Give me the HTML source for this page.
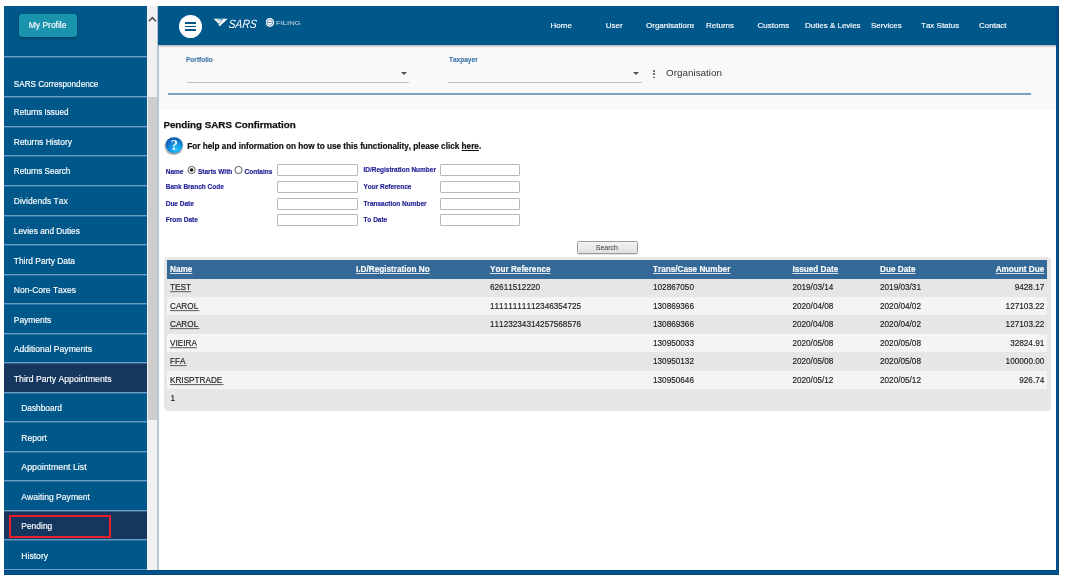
<!DOCTYPE html>
<html><head><meta charset="utf-8">
<style>
*{box-sizing:border-box;margin:0;padding:0}
html,body{width:1066px;height:582px;overflow:hidden;background:#fff;font-family:"Liberation Sans",sans-serif;-webkit-font-smoothing:antialiased;font-kerning:none}
#root{position:absolute;left:0;top:0;width:1066px;height:582px;will-change:transform}
.sk{-webkit-text-stroke:0.2px currentColor}
.it span,.fl,.lbl,.nav,.th,.btn-prof{-webkit-text-stroke:0.15px currentColor}
.a{position:absolute;white-space:nowrap}
#side{position:absolute;left:4px;top:6px;width:143px;height:569px;background:#00578a;overflow:hidden}
.btn-prof{position:absolute;left:14.6px;top:8.3px;width:58px;height:22.6px;background:#1a93ac;border-radius:3px;box-shadow:0 1px 2px rgba(0,0,0,.35);color:#fff;font-size:8.5px;line-height:23.2px;text-align:center}
.dv{position:absolute;left:0;width:143px;height:1px;background:#6a9dc2;box-shadow:0 1px 0 rgba(100,150,190,.45);z-index:1}
.it{position:absolute;left:0;width:143px;color:#fff;font-size:8.4px;white-space:nowrap}
.it span{position:absolute;left:10px;line-height:10px;transform:scaleY(1.1);transform-origin:0 8px}
.dark{background:#15375f}
#scr{position:absolute;left:147px;top:6px;width:10px;height:564px;background:#f1f1f1}
#thumb{position:absolute;left:1px;top:91.4px;width:9px;height:322.5px;background:#cdcdcd}
#cleft{position:absolute;left:157px;top:6px;width:2px;height:564px;background:#b5c8d8}
#hdr{position:absolute;left:158px;top:6px;width:901px;height:39px;background:#00578a;box-shadow:0 2px 2px -1px rgba(0,0,0,.35);z-index:2}
.nav{position:absolute;color:#fff;font-size:8px;white-space:nowrap;line-height:10px}
#filt{position:absolute;left:159px;top:45px;width:897px;height:65px;background:#f9f9f9}
#rb{position:absolute;left:1056px;top:6px;width:3px;height:569px;background:#004b85;z-index:3}
#bb{position:absolute;left:4px;top:570px;width:1055px;height:5px;background:#00528a;border-top:1px solid #004a80;border-bottom:1px solid #004a80;z-index:3}
.lbl{position:absolute;color:#3f76a8;font-weight:bold;font-size:7.6px;white-space:nowrap;line-height:8px;transform:scaleX(0.86);transform-origin:0 0}
.fl{position:absolute;color:#1d1d94;font-weight:bold;font-size:6.5px;white-space:nowrap;line-height:8px}
.inp{position:absolute;width:81px;height:12px;border:1px solid #b8b8b8;border-radius:1px;background:#fff}
.th{position:absolute;color:#fff;font-weight:bold;font-size:8.2px;text-decoration:underline;text-decoration-color:rgba(255,255,255,.8);text-underline-offset:1.2px;white-space:nowrap;line-height:10px}
.td{position:absolute;color:#222;font-size:8.2px;white-space:nowrap;line-height:10px;transform:scaleY(1.1);transform-origin:0 70%;-webkit-text-stroke:0.15px #222}
.u{text-decoration:underline;text-decoration-color:#666;text-underline-offset:0.8px}
</style></head><body><div id="root">
<div id="side">
<div class="btn-prof">My Profile</div>
<div class="dv" style="top:50px"></div>
<div class="it"><span style="top:73.68px;left:9.8px;font-size:8.15px">SARS Correspondence</span></div>
<div class="dv" style="top:90px"></div>
<div class="it" style="top:91px;height:29px"><span style="top:10.98px;left:9.8px;font-size:8.15px">Returns Issued</span></div>
<div class="dv" style="top:120px"></div>
<div class="it" style="top:121px;height:28px"><span style="top:10.40px;left:9.8px;font-size:8.45px">Returns History</span></div>
<div class="dv" style="top:149px"></div>
<div class="it" style="top:150px;height:29px"><span style="top:11.04px;left:9.8px;font-size:8.13px">Returns Search</span></div>
<div class="dv" style="top:179px"></div>
<div class="it" style="top:180px;height:29px"><span style="top:10.44px;left:9.8px;font-size:8.52px">Dividends Tax</span></div>
<div class="dv" style="top:209px"></div>
<div class="it" style="top:210px;height:28px"><span style="top:10.04px;left:9.8px;font-size:8.32px">Levies and Duties</span></div>
<div class="dv" style="top:238px"></div>
<div class="it" style="top:239px;height:29px"><span style="top:10.54px;left:9.8px;font-size:8.41px">Third Party Data</span></div>
<div class="dv" style="top:268px"></div>
<div class="it" style="top:269px;height:28px"><span style="top:10.04px;left:9.8px;font-size:8.49px">Non-Core Taxes</span></div>
<div class="dv" style="top:297px"></div>
<div class="it" style="top:298px;height:29px"><span style="top:10.58px;left:9.8px;font-size:8.45px">Payments</span></div>
<div class="dv" style="top:327px"></div>
<div class="it" style="top:328px;height:28px"><span style="top:10.07px;left:9.8px;font-size:8.58px">Additional Payments</span></div>
<div class="dv" style="top:356px"></div>
<div class="it dark" style="top:357px;height:29px"><span style="top:10.57px;left:9.8px;font-size:8.66px">Third Party Appointments</span></div>
<div class="dv" style="top:386px"></div>
<div class="it" style="top:387px;height:28px"><span style="top:10.22px;left:17.3px;font-size:8.32px">Dashboard</span></div>
<div class="dv" style="top:415px"></div>
<div class="it" style="top:416px;height:29px"><span style="top:10.67px;left:17.3px;font-size:8.53px">Report</span></div>
<div class="dv" style="top:445px"></div>
<div class="it" style="top:446px;height:28px"><span style="top:10.12px;left:17.3px;font-size:8.77px">Appointment List</span></div>
<div class="dv" style="top:474px"></div>
<div class="it" style="top:475px;height:29px"><span style="top:10.72px;left:17.3px;font-size:8.58px">Awaiting Payment</span></div>
<div class="dv" style="top:504px"></div>
<div class="it dark" style="top:505px;height:28px"><span style="top:10.29px;left:17.3px;font-size:8.45px">Pending</span></div>
<div class="dv" style="top:533px"></div>
<div class="it" style="top:534px;height:29px"><span style="top:10.77px;left:17.3px;font-size:8.61px">History</span></div>
<div class="dv" style="top:563px"></div>
<div style="position:absolute;left:5.3px;top:509.2px;width:101.6px;height:23.1px;border:2.2px solid #e8202a"></div>
</div>
<div id="scr"><div id="thumb"></div><svg style="position:absolute;left:1px;top:10px" width="9" height="6" viewBox="0 0 9 6"><path d="M0.8 5.2 L4.4 1.6 L8 5.2" fill="none" stroke="#505050" stroke-width="1.5"/></svg></div>
<div id="cleft"></div>
<div id="hdr"><div style="position:absolute;left:20.6px;top:8.7px;width:23.3px;height:23.3px;border-radius:50%;background:#fff"></div><div style="position:absolute;left:27.2px;top:16.20px;width:10.6px;height:1.6px;background:#00578a"></div><div style="position:absolute;left:27.2px;top:19.70px;width:10.6px;height:1.6px;background:#00578a"></div><div style="position:absolute;left:27.2px;top:23.20px;width:10.6px;height:1.6px;background:#00578a"></div><svg style="position:absolute;left:54px;top:10px" width="50" height="14" viewBox="0 0 50 14"><path d="M1.5 2.7 L15.8 2.7 L7.4 10.4 L6.2 7.2 Z" fill="#fff"/><path d="M5.6 4.2 L10.6 3.4 L6.6 8.2" fill="none" stroke="#00578a" stroke-width="0.6"/><text x="16.2" y="11.9" font-family="Liberation Sans" font-style="italic" font-size="12" fill="#fff" textLength="28.3" lengthAdjust="spacingAndGlyphs" transform="translate(1.2 0) skewX(-6)">SARS</text></svg><svg style="position:absolute;left:107.5px;top:10px" width="40" height="14" viewBox="0 0 40 14"><circle cx="3.9" cy="6.5" r="4.4" fill="#fff"/><circle cx="3.9" cy="6.5" r="2.9" fill="none" stroke="#00578a" stroke-width="0.55"/><rect x="1.4" y="6.1" width="5" height="0.6" fill="#00578a"/><text x="10" y="8.7" font-family="Liberation Sans" font-size="5.6" fill="#fff" fill-opacity="0.8" textLength="24.8" lengthAdjust="spacingAndGlyphs">FILING</text></svg><div class="nav" style="left:392.50px;top:14.73px">Home</div><div class="nav" style="left:447.70px;top:14.73px">User</div><div class="nav" style="left:488.00px;top:14.73px;width:48px;overflow:hidden">Organisations</div><div class="nav" style="left:548.00px;top:14.73px">Returns</div><div class="nav" style="left:599.60px;top:14.73px">Customs</div><div class="nav" style="left:647.00px;top:14.73px">Duties &amp; Levies</div><div class="nav" style="left:713.00px;top:14.73px">Services</div><div class="nav" style="left:763.00px;top:14.73px">Tax Status</div><div class="nav" style="left:821.00px;top:14.73px">Contact</div></div>
<div id="filt"><div class="lbl" style="left:27.40px;top:10.57px">Portfolio</div><div class="lbl" style="left:289.50px;top:10.57px">Taxpayer</div><div style="position:absolute;left:27.50px;top:37.30px;width:222.5px;height:1px;background:#c4c4c4"></div><div style="position:absolute;left:289.00px;top:37.30px;width:193.7px;height:1px;background:#c4c4c4"></div><div style="position:absolute;left:241.80px;top:26.80px;width:0;height:0;border-left:3px solid transparent;border-right:3px solid transparent;border-top:3.3px solid #555"></div><div style="position:absolute;left:474.00px;top:26.80px;width:0;height:0;border-left:3px solid transparent;border-right:3px solid transparent;border-top:3.3px solid #555"></div><div style="position:absolute;left:494.20px;top:25.20px;width:1.8px;height:1.8px;border-radius:50%;background:#444"></div><div style="position:absolute;left:494.20px;top:28.40px;width:1.8px;height:1.8px;border-radius:50%;background:#444"></div><div style="position:absolute;left:494.20px;top:31.60px;width:1.8px;height:1.8px;border-radius:50%;background:#444"></div><div class="a" style="left:507.00px;top:21.97px;font-size:9.9px;line-height:12px;color:#333">Organisation</div><div style="position:absolute;left:9.00px;top:48.20px;width:862.7px;height:1.5px;background:#7ba3c4"></div></div>
<div class="a" style="left:163.40px;top:119.10px;font-size:9.8px;font-weight:bold;color:#111;line-height:12px;-webkit-text-stroke:0.25px #111">Pending SARS Confirmation</div><svg style="position:absolute;left:163px;top:134.5px" width="22" height="22" viewBox="0 0 22 22"><defs><radialGradient id="hg" cx="0.62" cy="0.78" r="0.85"><stop offset="0" stop-color="#22c4ff"/><stop offset="0.45" stop-color="#1590e0"/><stop offset="1" stop-color="#0a4d9e"/></radialGradient><linearGradient id="rg" x1="0" y1="0" x2="0" y2="1"><stop offset="0" stop-color="#f4f4f4"/><stop offset="0.6" stop-color="#d0d0d0"/><stop offset="1" stop-color="#9a9a9a"/></linearGradient></defs><ellipse cx="10.8" cy="10.6" rx="9.7" ry="9.5" fill="url(#rg)"/><ellipse cx="11.1" cy="10.1" rx="8.7" ry="7.9" fill="url(#hg)"/><text x="11.3" y="15.4" text-anchor="middle" font-family="Liberation Serif" font-weight="bold" font-size="14.5" fill="#fff" fill-opacity="0.92">?</text></svg><div class="a" style="left:187.30px;top:141.76px;font-size:8.2px;font-weight:bold;color:#111;line-height:10px;-webkit-text-stroke:0.2px #111">For help and information on how to use this functionality, please click <span style="text-decoration:underline">here</span>.</div><div class="fl" style="left:363.40px;top:166.25px">ID/Registration Number</div><div class="inp" style="left:277.30px;top:164.30px"></div><div class="inp" style="left:439.80px;top:164.30px;width:80.5px"></div><div class="fl" style="left:165.70px;top:183.45px">Bank Branch Code</div><div class="fl" style="left:363.40px;top:183.45px">Your Reference</div><div class="inp" style="left:277.30px;top:181.30px"></div><div class="inp" style="left:439.80px;top:181.30px;width:80.5px"></div><div class="fl" style="left:165.70px;top:199.75px">Due Date</div><div class="fl" style="left:363.40px;top:199.75px">Transaction Number</div><div class="inp" style="left:277.30px;top:198.20px"></div><div class="inp" style="left:439.80px;top:198.20px;width:80.5px"></div><div class="fl" style="left:165.70px;top:215.75px">From Date</div><div class="fl" style="left:363.40px;top:215.75px">To Date</div><div class="inp" style="left:277.30px;top:214.30px"></div><div class="inp" style="left:439.80px;top:214.30px;width:80.5px"></div><div class="fl" style="left:165.70px;top:167.55px">Name</div><div class="fl" style="left:198.00px;top:167.55px">Starts With</div><div class="fl" style="left:244.50px;top:167.55px">Contains</div><svg style="position:absolute;left:186px;top:165px" width="58" height="10" viewBox="0 0 58 10"><circle cx="5.6" cy="5" r="3.6" fill="#fff" stroke="#333" stroke-width="0.8"/><circle cx="5.6" cy="5" r="1.8" fill="#111"/><circle cx="52.5" cy="5" r="3.6" fill="#fff" stroke="#333" stroke-width="0.8"/></svg><div style="position:absolute;left:576.5px;top:241.2px;width:61.5px;height:13.2px;border:1px solid #9a9a9a;border-radius:1.5px;background:linear-gradient(#f4f4f4,#e0e0e0);box-shadow:0 1px 0 rgba(0,0,0,.1)"></div><div class="a" style="left:595.80px;top:243.67px;font-size:7px;color:#333;line-height:8px">Search</div><div style="position:absolute;left:164px;top:257px;width:886.7px;height:153.6px;background:#e6e6e6;border-radius:4px"></div><div style="position:absolute;left:166.7px;top:260px;width:880.4px;height:18.5px;background:#346896"></div><div class="th" style="left:170.00px;top:264.66px">Name</div><div class="th" style="left:356.00px;top:264.66px">I.D/Registration No</div><div class="th" style="left:490.00px;top:264.66px">Your Reference</div><div class="th" style="left:653.00px;top:264.66px">Trans/Case Number</div><div class="th" style="left:792.40px;top:264.66px">Issued Date</div><div class="th" style="left:880.00px;top:264.66px">Due Date</div><div class="th" style="right:21.70px;top:264.66px">Amount Due</div><div style="position:absolute;left:166.7px;top:278.50px;width:880.4px;height:18.45px;background:#e6e6e6"></div><div class="td u" style="left:170.00px;top:283.26px">TEST</div><div class="td" style="left:490.00px;top:283.26px">62611512220</div><div class="td" style="left:653.00px;top:283.26px">102867050</div><div class="td" style="left:792.40px;top:283.26px">2019/03/14</div><div class="td" style="left:880.00px;top:283.26px">2019/03/31</div><div class="td" style="right:21.70px;top:283.26px">9428.17</div><div style="position:absolute;left:166.7px;top:296.95px;width:880.4px;height:18.45px;background:#f4f4f4"></div><div class="td u" style="left:170.00px;top:301.71px">CAROL<span style="font-size:4.5px">&nbsp;</span></div><div class="td" style="left:490.00px;top:301.71px">11111111112346354725</div><div class="td" style="left:653.00px;top:301.71px">130869366</div><div class="td" style="left:792.40px;top:301.71px">2020/04/08</div><div class="td" style="left:880.00px;top:301.71px">2020/04/02</div><div class="td" style="right:21.70px;top:301.71px">127103.22</div><div style="position:absolute;left:166.7px;top:315.40px;width:880.4px;height:18.45px;background:#e6e6e6"></div><div class="td u" style="left:170.00px;top:320.16px">CAROL<span style="font-size:4.5px">&nbsp;</span></div><div class="td" style="left:490.00px;top:320.16px">11123234314257568576</div><div class="td" style="left:653.00px;top:320.16px">130869366</div><div class="td" style="left:792.40px;top:320.16px">2020/04/08</div><div class="td" style="left:880.00px;top:320.16px">2020/04/02</div><div class="td" style="right:21.70px;top:320.16px">127103.22</div><div style="position:absolute;left:166.7px;top:333.85px;width:880.4px;height:18.45px;background:#f4f4f4"></div><div class="td u" style="left:170.00px;top:338.61px">VIEIRA</div><div class="td" style="left:653.00px;top:338.61px">130950033</div><div class="td" style="left:792.40px;top:338.61px">2020/05/08</div><div class="td" style="left:880.00px;top:338.61px">2020/05/08</div><div class="td" style="right:21.70px;top:338.61px">32824.91</div><div style="position:absolute;left:166.7px;top:352.30px;width:880.4px;height:18.45px;background:#e6e6e6"></div><div class="td u" style="left:170.00px;top:357.06px">FFA<span style="font-size:4.5px">&nbsp;</span></div><div class="td" style="left:653.00px;top:357.06px">130950132</div><div class="td" style="left:792.40px;top:357.06px">2020/05/08</div><div class="td" style="left:880.00px;top:357.06px">2020/05/08</div><div class="td" style="right:21.70px;top:357.06px">100000.00</div><div style="position:absolute;left:166.7px;top:370.75px;width:880.4px;height:18.45px;background:#f4f4f4"></div><div class="td u" style="left:170.00px;top:375.51px">KRISPTRADE<span style="font-size:4.5px">&nbsp;</span></div><div class="td" style="left:653.00px;top:375.51px">130950646</div><div class="td" style="left:792.40px;top:375.51px">2020/05/12</div><div class="td" style="left:880.00px;top:375.51px">2020/05/12</div><div class="td" style="right:21.70px;top:375.51px">926.74</div><div class="td" style="left:170.50px;top:393.56px">1</div>
<div id="rb"></div><div id="bb"></div>
</div></body></html>
